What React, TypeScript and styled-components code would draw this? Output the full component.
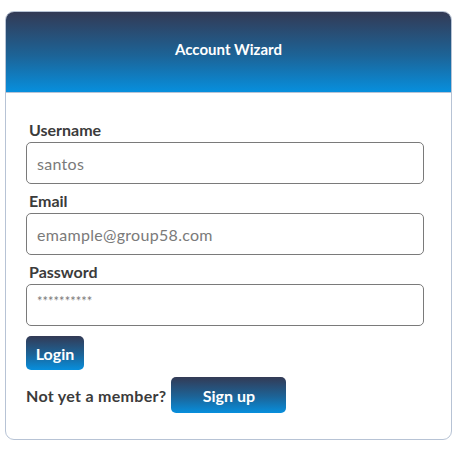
import React from "react";
import styled, { createGlobalStyle } from "styled-components";

const Global = createGlobalStyle`
  html, body { margin: 0; padding: 0; background: #ffffff; }
  body { font-family: "Lato", "Noto Sans", sans-serif; }
  * { box-sizing: border-box; }
`;

const Page = styled.div`
  padding: 11px 16px 0 5px;
`;

const Card = styled.div`
  width: 447px;
  border: 1px solid #b7c3d5;
  border-radius: 9px;
  overflow: hidden;
  background: #ffffff;
`;

const Header = styled.div`
  height: 80px;
  display: flex;
  align-items: center;
  justify-content: center;
  background: linear-gradient(to bottom, #333a55 0%, #1c6498 55%, #078fdd 100%);
  color: #ffffff;
  font-weight: 700;
  font-size: 15px;
  padding-bottom: 6px;
`;

const Body = styled.form`
  display: flex;
  flex-direction: column;
  align-items: flex-start;
  padding: 20px 27px 26px 20px;
  border-top: 1px solid #b7c3d5;
`;

const Label = styled.label`
  display: block;
  margin: 7px 0 2px 3px;
  line-height: 20px;
  font-size: 16px;
  font-weight: 700;
  color: #3b3b3b;
`;

const Input = styled.input`
  width: 398px;
  height: 42px;
  border: 1px solid #7a7a7a;
  border-radius: 5px;
  padding: 0 10px;
  font-family: "Lato", "Noto Sans", sans-serif;
  font-size: 16px;
  letter-spacing: 0.3px;
  color: #777777;
  background: #ffffff;
  outline: none;
  &::placeholder { color: #7a7a7a; }
`;

const PasswordInput = styled(Input)`
  padding-bottom: 8px;
  font-size: 13px;
  letter-spacing: 0;
`;

const Button = styled.button<{ $w: number; $h: number }>`
  width: ${(p) => p.$w}px;
  height: ${(p) => p.$h}px;
  border: none;
  border-radius: 5px;
  background: linear-gradient(to bottom, #333a55 0%, #1c6498 55%, #078fdd 100%);
  color: #ffffff;
  font-family: "Lato", "Noto Sans", sans-serif;
  font-weight: 700;
  font-size: 16px;
  padding: 0;
  cursor: pointer;
`;

const LoginButton = styled(Button)`
  margin-top: 10px;
`;

const SignupRow = styled.div`
  display: flex;
  align-items: center;
  gap: 5px;
  margin-top: 7px;
`;

const Prompt = styled.span`
  font-size: 16px;
  letter-spacing: 0.3px;
  font-weight: 700;
  color: #3b3b3b;
`;

export default function App() {
  return (
    <>
      <Global />
      <Page>
        <Card>
          <Header>Account Wizard</Header>
          <Body onSubmit={(e) => e.preventDefault()}>
            <Label>Username</Label>
            <Input placeholder="santos" />
            <Label>Email</Label>
            <Input placeholder="emample@group58.com" />
            <Label>Password</Label>
            <PasswordInput placeholder="**********" />
            <LoginButton $w={58} $h={34}>Login</LoginButton>
            <SignupRow>
              <Prompt>Not yet a member?</Prompt>
              <Button type="button" $w={115} $h={36}>Sign up</Button>
            </SignupRow>
          </Body>
        </Card>
      </Page>
    </>
  );
}
